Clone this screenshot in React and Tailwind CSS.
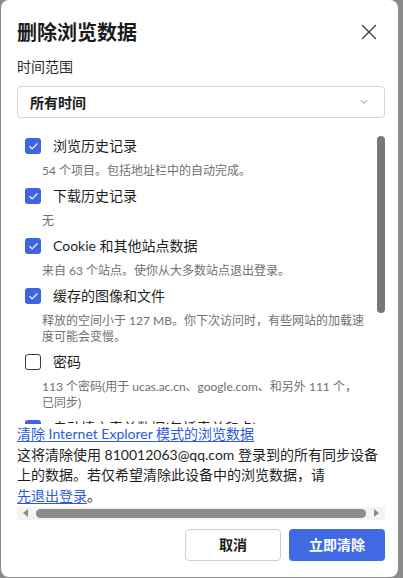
import { Check, X, ChevronDown } from 'lucide-react';

const items = [
  { label: '浏览历史记录', desc: ['54 个项目。包括地址栏中的自动完成。'], checked: true },
  { label: '下载历史记录', desc: ['无'], checked: true },
  { label: 'Cookie 和其他站点数据', desc: ['来自 63 个站点。使你从大多数站点退出登录。'], checked: true },
  { label: '缓存的图像和文件', desc: ['释放的空间小于 127 MB。你下次访问时，有些网站的加载速', '度可能会变慢。'], checked: true },
  { label: '密码', desc: ['113 个密码(用于 ucas.ac.cn、google.com、和另外 111 个，', '已同步)'], checked: false },
  { label: '自动填充表单数据(包括表单和卡)', desc: ['1 个地址、5 个其他建议'], checked: true },
];

function Box({ checked }) {
  if (!checked) {
    return <span className="w-4 h-4 shrink-0 rounded-[3px] border border-[#3a3a3a] bg-white" />;
  }
  return (
    <span className="w-4 h-4 shrink-0 rounded-[3px] bg-[#3e64e2] flex items-center justify-center">
      <Check className="w-[11px] h-[11px] text-white" strokeWidth={2.5} />
    </span>
  );
}

export default function App() {
  return (
    <div className="w-[403px] h-[578px] bg-[#8b8b8b] font-['Lato','Noto_Sans_CJK_SC',sans-serif]">
      <div className="ml-[1px] w-[397px] h-[577px] bg-white rounded-lg pl-4 pr-[13px] pt-[18px] flex flex-col">
        {/* cabecera */}
        <div className="flex items-center justify-between h-7">
          <h1 className="text-[20px] leading-7 font-bold text-[#1b1b1b]">删除浏览数据</h1>
          <X className="w-[26px] h-[26px] mr-[3px] text-[#3a3a3a]" strokeWidth={1.1} />
        </div>

        <p className="mt-[11px] text-[14px] leading-5 text-[#2b2b2b]">时间范围</p>

        <div className="mt-[9px] h-8 border border-[#d4d4d4] rounded-[4px] flex items-center justify-between pl-3 pr-[14px]">
          <span className="text-[14px] font-bold text-[#1b1b1b]">所有时间</span>
          <ChevronDown className="w-[12px] h-[12px] text-[#6a6a6a]" strokeWidth={1.4} />
        </div>

        {/* lista con scroll */}
        <div className="relative mt-[6px] h-[300px] overflow-hidden pt-3">
          {items.map((it) => (
            <div key={it.label} className="pl-2 pb-[7px]">
              <div className="h-5 flex items-center gap-3">
                <Box checked={it.checked} />
                <span className="text-[14px] leading-5 text-[#1f1f1f] whitespace-nowrap">{it.label}</span>
              </div>
              <div className="mt-[7px] pl-[17px] text-[12px] leading-4 text-[#707070]">
                {it.desc.map((d) => (
                  <p key={d} className="whitespace-nowrap">{d}</p>
                ))}
              </div>
            </div>
          ))}
          <div className="absolute right-0 top-3 w-2 h-[177px] rounded-full bg-[#777777]" />
        </div>

        {/* texto inferior */}
        <div className="text-[14px] leading-[20.67px] text-[#1f1f1f] whitespace-nowrap">
          <p><span className="text-[#2c5bd8] underline underline-offset-2">清除 Internet Explorer 模式的浏览数据</span></p>
          <p>这将清除使用 810012063@qq.com 登录到的所有同步设备</p>
          <p>上的数据。若仅希望清除此设备中的浏览数据，请</p>
          <p><span className="text-[#2c5bd8] underline underline-offset-2">先退出登录</span>。</p>
        </div>

        {/* barra horizontal */}
        <div className="h-[13px] bg-[#f3f3f3] flex items-center px-[6px] gap-[8px]">
          <svg width="5" height="8" viewBox="0 0 5 8"><polygon points="5,0 5,8 0,4" fill="#8a8a8a" /></svg>
          <div className="flex-1 h-[9px] rounded-full bg-[#8c8c8c]" />
          <svg width="5" height="8" viewBox="0 0 5 8"><polygon points="0,0 0,8 5,4" fill="#8a8a8a" /></svg>
        </div>

        <div className="mt-[9px] flex justify-end gap-2">
          <button className="w-24 h-8 rounded-[4px] border border-[#cfcfcf] bg-white text-[14px] font-bold text-[#1b1b1b]">取消</button>
          <button className="w-24 h-8 rounded-[4px] bg-[#4169e1] text-[14px] font-bold text-white">立即清除</button>
        </div>
      </div>
    </div>
  );
}
